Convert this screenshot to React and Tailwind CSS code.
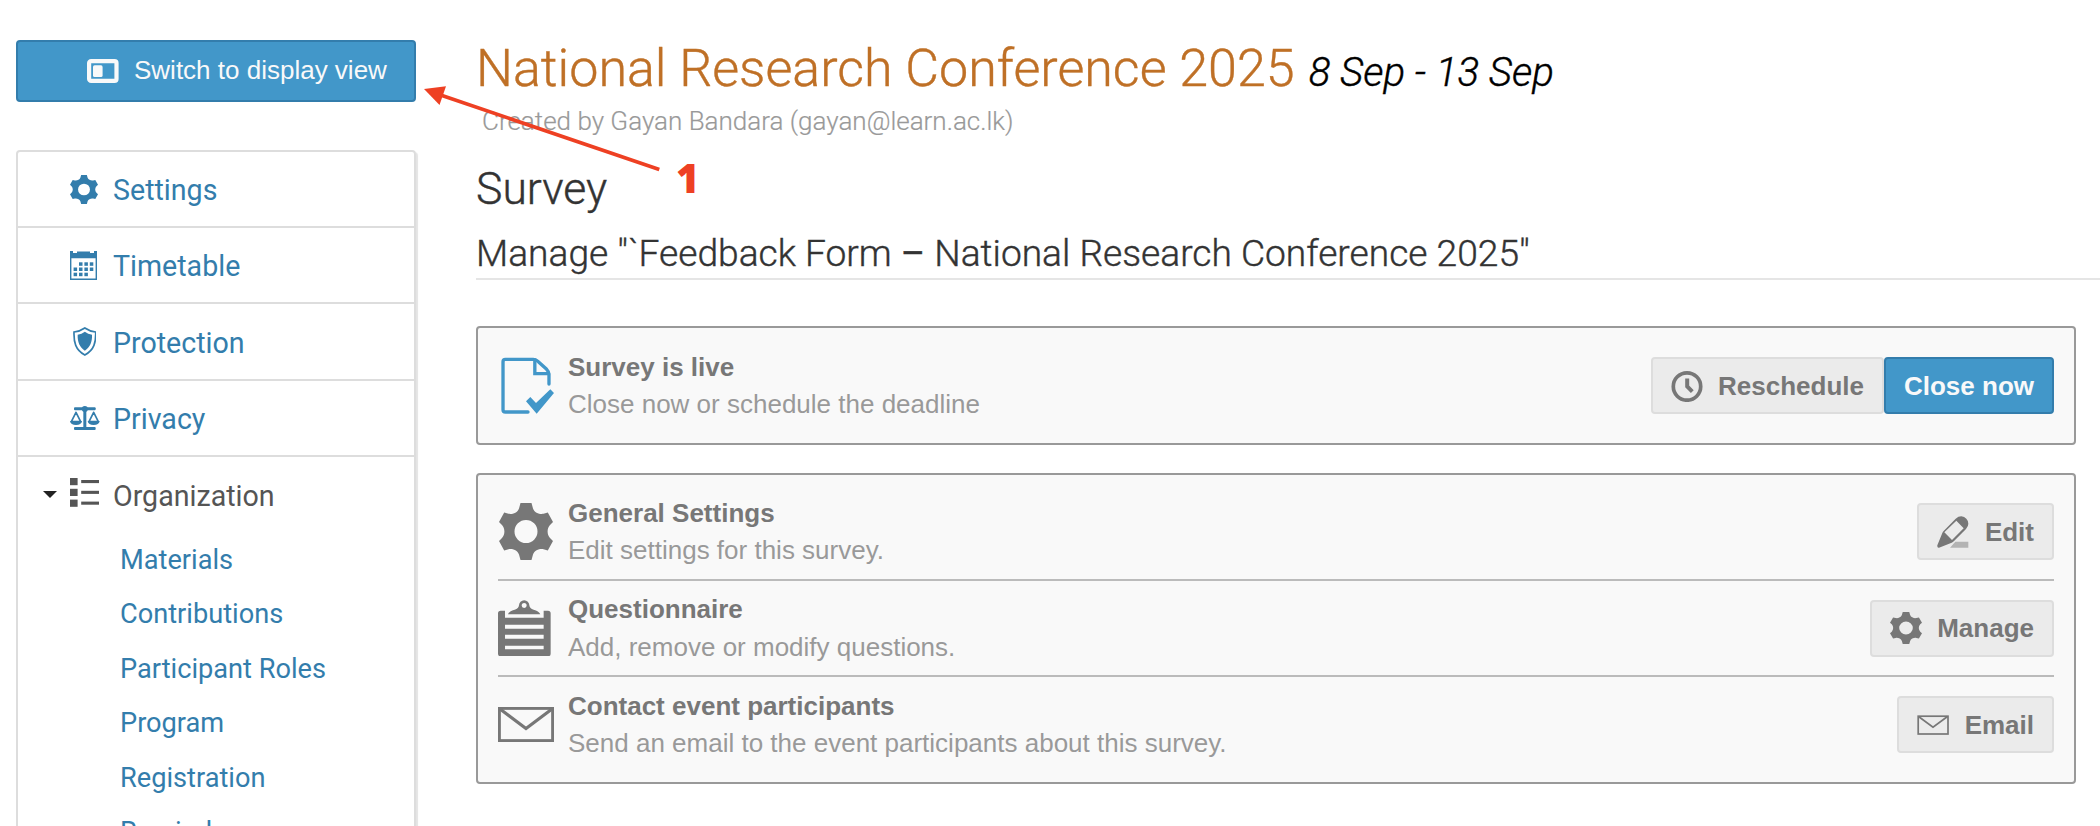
import React from 'react';

function Gear({ className }) {
  return (
    <svg viewBox="0 0 54 57" preserveAspectRatio="none" fill="currentColor" className={className}>
      <path
        fillRule="evenodd"
        d="M21.5 0H32.5L34 5.5C35.5 10 41 11.5 44.5 10.8L48.8 9.6L54 19L51 22C47.8 25.5 47.8 31.5 51 35L54 38L48.8 47.4L44.5 46.2C41 45.5 35.5 47 34 51.5L32.5 57H21.5L20 51.5C18.5 47 13 45.5 9.5 46.2L5.2 47.4L0 38L3 35C6.2 31.5 6.2 25.5 3 22L0 19L5.2 9.6L9.5 10.8C13 11.5 18.5 10 20 5.5ZM27 17A11.5 11.5 0 1 0 27 40A11.5 11.5 0 1 0 27 17Z"
      />
    </svg>
  );
}

function Calendar() {
  const cells = [
    [9, 11.3], [14.4, 11.3], [19.8, 11.3],
    [3.6, 16.5], [9, 16.5], [14.4, 16.5], [19.8, 16.5],
    [3.6, 21.7], [9, 21.7], [14.4, 21.7],
  ];
  return (
    <svg viewBox="0 0 27 29" fill="currentColor" className="h-[29px] w-[27px]">
      <path d="M0 0H3V2H7V.6H20V2H24V0H27V7.3H0Z" />
      <path d="M.7 5V28.2H26.3V5" fill="none" stroke="currentColor" strokeWidth="1.4" />
      {cells.map(([x, y]) => (
        <rect key={`${x}-${y}`} x={x} y={y} width="3.5" height="3.5" />
      ))}
    </svg>
  );
}

function Shield() {
  return (
    <svg viewBox="0 0 71 87" fill="currentColor" className="ml-[2.7px] h-[29px] w-[23.7px]">
      <path d="M35.5 3Q50 13 68 15C69 45 64 69 35.5 84C7 69 2 45 3 15Q21 13 35.5 3Z" fill="none" stroke="currentColor" strokeWidth="5" />
      <path d="M35.5 14Q45 21 57 23C58 45 51 60 35.5 71C20 60 13 45 14 23Q26 21 35.5 14Z" />
    </svg>
  );
}

function Scales() {
  return (
    <svg viewBox="0 0 90 72" fill="currentColor" className="h-[24px] w-[30px]">
      <rect x="12" y="4" width="65" height="9" rx="3" />
      <rect x="12" y="63" width="65" height="9" rx="3" />
      <rect x="40" y="5" width="9" height="62" />
      <circle cx="44.5" cy="9" r="9" />
      <path d="M18 19L4 47H32Z" fill="none" stroke="currentColor" strokeWidth="5" strokeLinejoin="round" />
      <path d="M71 19L57 47H85Z" fill="none" stroke="currentColor" strokeWidth="5" strokeLinejoin="round" />
      <path d="M0 45H36Q34 57 18 57Q2 57 0 45Z" />
      <path d="M53 45H89Q87 57 71 57Q55 57 53 45Z" />
    </svg>
  );
}

function ListIcon() {
  return (
    <svg viewBox="0 0 29 29" fill="currentColor" className="h-[29px] w-[29px]">
      {[0, 10.8, 21.6].map((y) => (
        <g key={y}>
          <rect x="0" y={y} width="7.6" height="7.2" />
          <rect x="11.2" y={y + 2} width="17.8" height="3.1" />
        </g>
      ))}
    </svg>
  );
}

function DisplayIcon() {
  return (
    <svg viewBox="0 0 32 24" fill="currentColor" className="h-6 w-8">
      <rect x="2.1" y="2.1" width="27.4" height="19.8" rx="2" fill="none" stroke="currentColor" strokeWidth="4.2" />
      <rect x="6" y="6.3" width="9.6" height="11.8" rx="1.6" />
    </svg>
  );
}

function DocCheck() {
  return (
    <svg viewBox="24 20 171 172" className="h-[57.3px] w-[57px] text-[#4297c9]">
      <g fill="none" stroke="currentColor" strokeWidth="10" strokeLinecap="round" strokeLinejoin="round">
        <path d="M114 185H46Q39 185 39 178V34Q39 27 46 27H130Q138 27 145 34L170 57Q177 64 177 72V101" />
        <path d="M134.500 28V70H176" strokeLinejoin="miter" />
      </g>
      <path d="M108 153L121 140L138 158L181 117L192 128L140 190Z" fill="currentColor" />
    </svg>
  );
}

function Clipboard() {
  return (
    <svg viewBox="24 748 159 169" fill="currentColor" className="h-[56.3px] w-[53px]">
      <path
        fillRule="evenodd"
        d="M32 780H45V801H161V780H174Q182 780 182 788V909Q182 917 174 917H32Q24 917 24 909V788Q24 780 32 780ZM45 822V834H161V822ZM45 852V864H161V852ZM45 885V896H161V885Z"
      />
      <path
        fillRule="evenodd"
        d="M54 791Q58 780 74 777Q86 774 87 764A15.500 15.500 0 0 1 118 764Q119 774 131 777Q146 780 151 791ZM102.500 757A7.500 7.500 0 1 0 102.500 772A7.500 7.500 0 1 0 102.500 757Z"
      />
    </svg>
  );
}

function Envelope() {
  return (
    <svg viewBox="0 0 56 35" fill="none" stroke="currentColor" className="h-[35px] w-[56px]">
      <rect x="1.4" y="1.4" width="53.200" height="32.200" strokeWidth="2.900" />
      <path d="M2 2L28 21.500L54 2" strokeWidth="3.200" />
    </svg>
  );
}

function Clock() {
  return (
    <svg viewBox="0 0 32 32" fill="none" stroke="currentColor" className="h-8 w-8">
      <circle cx="16" cy="16.500" r="13.700" strokeWidth="3.700" />
      <path d="M16.200 8.500V16.500L21.300 21.700" strokeWidth="4" />
    </svg>
  );
}

function Pencil() {
  return (
    <svg viewBox="354 112 96 96" className="h-8 w-8">
      <path d="M409 189H448V207H393Z" fill="#b3b3b3" />
      <path
        fill="currentColor"
        fillRule="evenodd"
        d="M355 200L370 163Q371 160 374 157L410 120Q418 113 427 113Q436 114 442 120Q448 126 448 135Q448 143 441 151L405 187Q402 190 398 192L360 207Q354 208 355 200ZM376 161L399 184L434 149L412 126Z"
      />
    </svg>
  );
}

function SmallEnvelope() {
  return (
    <svg viewBox="0 0 32 20" fill="none" stroke="currentColor" className="h-5 w-8">
      <rect x="1.200" y="1.200" width="29.800" height="17.800" strokeWidth="1.700" />
      <path d="M1.500 1.500L16 12.200L30.500 1.500" strokeWidth="1.700" />
    </svg>
  );
}

const blue = 'text-[#337dac]';

const menu = [
  { label: 'Settings', icon: <Gear className="h-[29px] w-[28px]" />, height: 'h-[76px]' },
  { label: 'Timetable', icon: <Calendar />, height: 'h-[76px]' },
  { label: 'Protection', icon: <Shield />, height: 'h-[77px]' },
  { label: 'Privacy', icon: <Scales />, height: 'h-[76px]' },
];

const sections = ['Materials', 'Contributions', 'Participant Roles', 'Program', 'Registration', 'Reminders'];

function Sidebar() {
  return (
    <aside className="w-[400px] shrink-0 pt-10">
      <button className="flex h-[62px] w-full items-center rounded-[4px] border-2 border-[#337dac] bg-[#4297c9] pl-[69px] text-[26px] leading-none text-[#f9f9f9]">
        <DisplayIcon />
        <span className="ml-[15px] -mt-[3px] whitespace-nowrap">Switch to display view</span>
      </button>
      <nav className="mt-12 h-[760px] rounded-[4px] border-2 border-[#ddd] font-['Roboto',sans-serif] text-[28.6px] leading-9 shadow-[2px_2px_1px_#e4e4e4]">
        {menu.map(({ label, icon, height }) => (
          <div key={label} className={`flex items-center border-b-2 border-[#ddd] pl-[52px] ${blue} ${height}`}>
            <span className="w-[43px] shrink-0">{icon}</span>
            <span className="pt-[2px]">{label}</span>
          </div>
        ))}
        <div className="flex h-[75.5px] items-center pl-[25px] text-[#555]">
          <svg viewBox="0 0 14 7" className="h-[7px] w-[14px] text-[#222]">
            <path d="M0 0H14L7 7Z" fill="currentColor" />
          </svg>
          <span className="ml-[13px] w-[43px] shrink-0 pb-1">
            <ListIcon />
          </span>
          <span className="pt-[2px]">Organization</span>
        </div>
        <ul className={`pl-[102px] text-[27.2px] ${blue}`}>
          {sections.map((s) => (
            <li key={s} className="h-[54.5px] leading-[54.5px]">{s}</li>
          ))}
        </ul>
      </nav>
    </aside>
  );
}

function Button({ icon, primary, children }) {
  const tone = primary
    ? 'border-[#337dac] bg-[#4297c9] text-[#f9f9f9]'
    : 'border-[#ddd] bg-[#ebebeb] text-[#777]';
  return (
    <button className={`flex h-[57px] items-center gap-[15.500px] rounded-[4px] border-2 px-[18px] text-[26px] font-bold leading-none whitespace-nowrap ${tone}`}>
      {icon}
      <span>{children}</span>
    </button>
  );
}

function Row({ icon, title, text, className, children }) {
  return (
    <div className={`flex items-center ${className}`}>
      <div className="flex w-[70px] shrink-0 items-center text-[#777]">{icon}</div>
      <div className="flex-1 pt-px text-[26px] leading-[37.3px]">
        <div className="font-bold text-[#777]">{title}</div>
        <div className="text-[#999]">{text}</div>
      </div>
      <div className="flex">{children}</div>
    </div>
  );
}

export default function App() {
  return (
    <div className="relative flex h-[826px] w-[2100px] overflow-hidden bg-white pl-4 font-['Liberation_Sans',Arial,sans-serif]">
      <Sidebar />
      <main className="ml-[60px] flex-1 pt-[38px]">
        <header className="font-['Roboto',sans-serif] font-light [-webkit-text-stroke:0.4px]">
          <h1 className="flex h-[62px] items-baseline text-[52px] leading-[62px] text-[#bf7026]">
            National Research Conference 2025
            <span className="ml-[14px] text-[40.3px] italic text-black">8 Sep - 13 Sep</span>
          </h1>
          <p className="mt-[6px] pl-[6px] text-[26px] leading-[30px] text-[#999] [-webkit-text-stroke:0.2px]">
            Created by Gayan Bandara (gayan@learn.ac.lk)
          </p>
          <h2 className="mt-7 text-[44.5px] leading-[50px] text-[#333]">Survey</h2>
          <h3 className="mt-[18px] h-12 border-b-2 border-[#e5e5e5] text-[37.15px] leading-[44px] text-[#333]">
            Manage "`Feedback Form <span className="font-normal">–</span> National Research Conference 2025"
          </h3>
        </header>

        <section className="mt-[46px] flex h-[119px] w-[1600px] flex-col justify-center rounded-[4px] border-2 border-[#999] bg-[#f9f9f9] px-5">
          <Row icon={<DocCheck />} title="Survey is live" text="Close now or schedule the deadline">
            <Button icon={<Clock />}>Reschedule</Button>
            <Button primary>Close now</Button>
          </Row>
        </section>

        <section className="mt-7 h-[311px] w-[1600px] rounded-[4px] border-2 border-[#999] bg-[#f9f9f9] px-5 pt-[9px]">
          <Row
            className="h-[97px] border-b-2 border-[#bbb]"
            icon={<Gear className="ml-px h-[57px] w-[54px]" />}
            title="General Settings"
            text="Edit settings for this survey."
          >
            <Button icon={<Pencil />}>Edit</Button>
          </Row>
          <Row
            className="h-[96px] border-b-2 border-[#bbb]"
            icon={<Clipboard />}
            title="Questionnaire"
            text="Add, remove or modify questions."
          >
            <Button icon={<Gear className="h-8 w-8" />}>Manage</Button>
          </Row>
          <Row
            className="h-[95px]"
            icon={<Envelope />}
            title="Contact event participants"
            text="Send an email to the event participants about this survey."
          >
            <Button icon={<SmallEnvelope />}>Email</Button>
          </Row>
        </section>
      </main>

      <svg viewBox="0 0 240 90" className="absolute left-[422px] top-[84px] h-[90px] w-[240px]">
        <path d="M20 11.500L237.300 85.500" stroke="#ee4023" strokeWidth="3.700" />
        <path d="M2 5L24 2.300L17.500 21Z" fill="#ee4023" />
      </svg>
      <span className="absolute left-[676px] top-[151px] font-['Open_Sans',sans-serif] text-[40px] font-extrabold leading-[54px] text-[#ee4023]">1</span>
    </div>
  );
}
